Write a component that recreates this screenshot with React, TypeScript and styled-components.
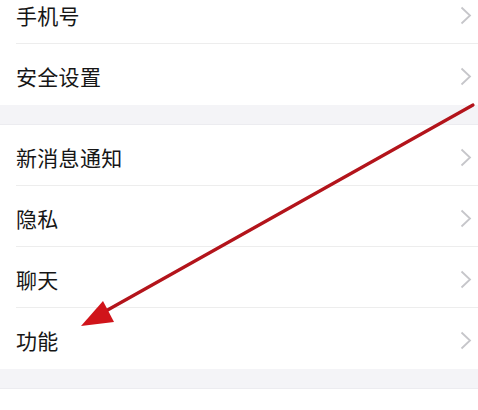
import React from "react"
import styled, { createGlobalStyle } from "styled-components"

const GlobalStyle = createGlobalStyle`
  html, body {
    margin: 0;
    padding: 0;
    background: #ffffff;
    overflow: hidden;
  }
  body {
    font-family: "Noto Sans CJK SC", "Noto Sans", sans-serif;
  }
`

const Screen = styled.div`
  position: relative;
  width: 478px;
  height: 410px;
  overflow: hidden;
  background: #ffffff;
`

// the page is scrolled a little, so the first row is cut off at the top
const Scroller = styled.div`
  display: flex;
  flex-direction: column;
  margin-top: -17px;
`

const Group = styled.section`
  display: flex;
  flex-direction: column;
  background: #ffffff;
`

const Gap = styled.div`
  height: 19px;
  background: #f4f4f7;
  border-bottom: 1px solid #ececf0;
`

const Row = styled.div<{ $last?: boolean }>`
  position: relative;
  display: flex;
  align-items: center;
  justify-content: space-between;
  height: 61px;
  padding: 3px 6px 0 16px;
  box-sizing: border-box;

  &::after {
    content: "";
    display: ${(p) => (p.$last ? "none" : "block")};
    position: absolute;
    left: 16px;
    right: 0;
    bottom: 0;
    height: 1px;
    background: #ededed;
  }
`

const Label = styled.span`
  font-size: 21px;
  line-height: 1;
  color: #161616;
  letter-spacing: 0.3px;
`

const Chevron = styled.svg`
  width: 12px;
  height: 19px;
  flex-shrink: 0;
`

const ArrowLayer = styled.svg`
  position: absolute;
  left: 0;
  top: 0;
  pointer-events: none;
`

const ChevronIcon = () => (
  <Chevron viewBox="0 0 12 19">
    <polyline points="1.5,1.5 10,9.5 1.5,17.5" fill="none" stroke="#c6c6ca" strokeWidth="1.8" strokeLinejoin="miter" />
  </Chevron>
)

const groups = [
  ["手机号", "安全设置"],
  ["新消息通知", "隐私", "聊天", "功能"],
  ["通用", "聊天记录"],
]

export default function App() {
  return (
    <>
      <GlobalStyle />
      <Screen>
        <Scroller>
          {groups.map((items, gi) => (
            <React.Fragment key={gi}>
              {gi > 0 && <Gap />}
              <Group>
                {items.map((label, i) => (
                  <Row key={label} $last={i === items.length - 1}>
                    <Label>{label}</Label>
                    <ChevronIcon />
                  </Row>
                ))}
              </Group>
            </React.Fragment>
          ))}
        </Scroller>
        <ArrowLayer width="478" height="410" viewBox="0 0 478 410">
          <line x1="473" y1="105" x2="104" y2="312" stroke="#b3141b" strokeWidth="3.2" strokeLinecap="round" />
          <polygon points="81,326 103,301 114,322" fill="#d0141a" />
        </ArrowLayer>
      </Screen>
    </>
  )
}
